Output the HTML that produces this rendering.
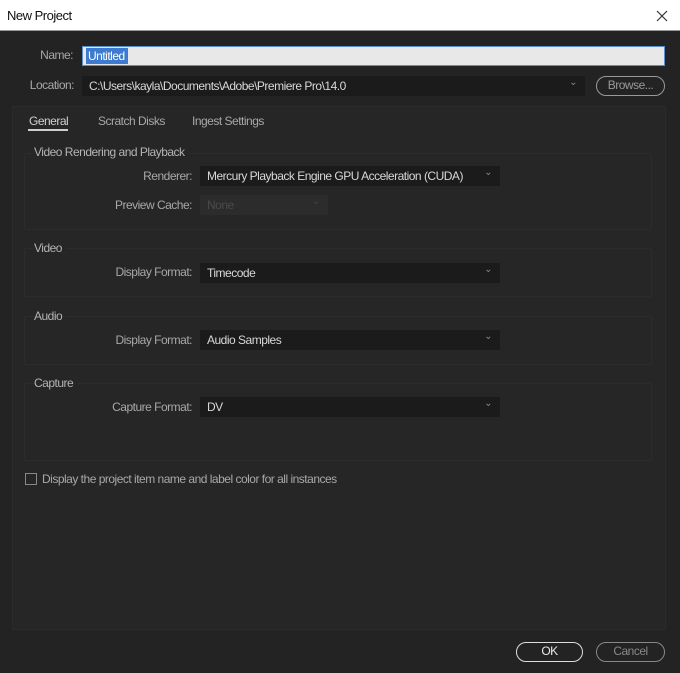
<!DOCTYPE html>
<html><head><style>
*{margin:0;padding:0;box-sizing:border-box}
body{width:680px;height:673px;background:#232323;position:relative;overflow:hidden;font-family:"Liberation Sans",sans-serif;font-size:12px;letter-spacing:-0.5px;color:#a8a8a8}
.a{position:absolute;white-space:nowrap}
.title{left:0;top:0;width:680px;height:31px;background:#fff;border-bottom:1px solid #999}
.lbl{text-align:right;line-height:14px}
.dd{position:absolute;background:#1b1b1b;color:#d8d8d8;padding-left:7px;line-height:20px;height:20px;overflow:hidden}
.dd .ch{position:absolute;right:8px;top:-3px;color:#888;font-size:10px}
.grp{position:absolute;left:24px;width:628px;border:1px solid #2c2c2c;border-radius:2px}
.gt{line-height:14px;color:#b4b4b4}
.btn{position:absolute;height:20px;border:1.5px solid #999;border-radius:10px;text-align:center;line-height:17px}
</style></head><body>
<div class="a title"></div>
<div class="a" style="left:7px;top:8px;color:#111;font-size:13px">New Project</div>
<svg class="a" style="left:656px;top:10px" width="12" height="12"><path d="M1 1L11 11M11 1L1 11" stroke="#333" stroke-width="1.2"/></svg>

<div class="a lbl" style="left:20px;width:53px;top:48px">Name:</div>
<div class="a" style="left:82px;top:46px;width:583px;height:20px;background:#e8e8e8;border:1px solid #5b8fd0"></div>
<div class="a" style="left:86px;top:48px;height:16px;width:42px;background:#3d7bd0;color:#fff;line-height:16px;padding-left:2px">Untitled</div>

<div class="a lbl" style="left:10px;width:64px;top:78px">Location:</div>
<div class="dd" style="left:82px;top:76px;width:503px">C:\Users\kayla\Documents\Adobe\Premiere Pro\14.0<span class="ch">&#8964;</span></div>
<div class="btn" style="left:596px;top:76px;width:69px;color:#999">Browse...</div>

<div class="a" style="left:12px;top:106px;width:654px;height:524px;background:#262626;border:1px solid #2b2b2b"></div>
<div class="a" style="left:29px;top:114px;color:#d0d0d0">General</div>
<div class="a" style="left:28px;top:129px;width:40px;height:2px;background:#cfcfcf"></div>
<div class="a" style="left:98px;top:114px">Scratch Disks</div>
<div class="a" style="left:192px;top:114px">Ingest Settings</div>

<div class="grp" style="top:153px;height:77px"></div>
<div class="a gt" style="left:34px;top:145px;background:#262626;padding-right:4px">Video Rendering and Playback</div>
<div class="a lbl" style="left:90px;width:102px;top:169px">Renderer:</div>
<div class="dd" style="left:200px;top:166px;width:300px">Mercury Playback Engine GPU Acceleration (CUDA)<span class="ch">&#8964;</span></div>
<div class="a lbl" style="left:90px;width:102px;top:198px">Preview Cache:</div>
<div class="dd" style="left:200px;top:195px;width:128px;background:#2c2c2c;color:#4a4a4a">None<span class="ch" style="color:#444">&#8964;</span></div>

<div class="grp" style="top:248px;height:49px"></div>
<div class="a gt" style="left:34px;top:241px;background:#262626;padding-right:4px">Video</div>
<div class="a lbl" style="left:90px;width:102px;top:265px">Display Format:</div>
<div class="dd" style="left:200px;top:263px;width:300px">Timecode<span class="ch">&#8964;</span></div>

<div class="grp" style="top:316px;height:49px"></div>
<div class="a gt" style="left:34px;top:309px;background:#262626;padding-right:4px">Audio</div>
<div class="a lbl" style="left:90px;width:102px;top:333px">Display Format:</div>
<div class="dd" style="left:200px;top:330px;width:300px">Audio Samples<span class="ch">&#8964;</span></div>

<div class="grp" style="top:383px;height:78px"></div>
<div class="a gt" style="left:34px;top:376px;background:#262626;padding-right:4px">Capture</div>
<div class="a lbl" style="left:90px;width:102px;top:400px">Capture Format:</div>
<div class="dd" style="left:200px;top:397px;width:300px">DV<span class="ch">&#8964;</span></div>

<div class="a" style="left:25px;top:473px;width:12px;height:12px;border:1px solid #888"></div>
<div class="a" style="left:42px;top:472px">Display the project item name and label color for all instances</div>

<div class="btn" style="left:516px;top:642px;width:67px;border-color:#ddd;color:#e8e8e8">OK</div>
<div class="btn" style="left:596px;top:642px;width:69px;border-color:#888;color:#888">Cancel</div>
</body></html>
